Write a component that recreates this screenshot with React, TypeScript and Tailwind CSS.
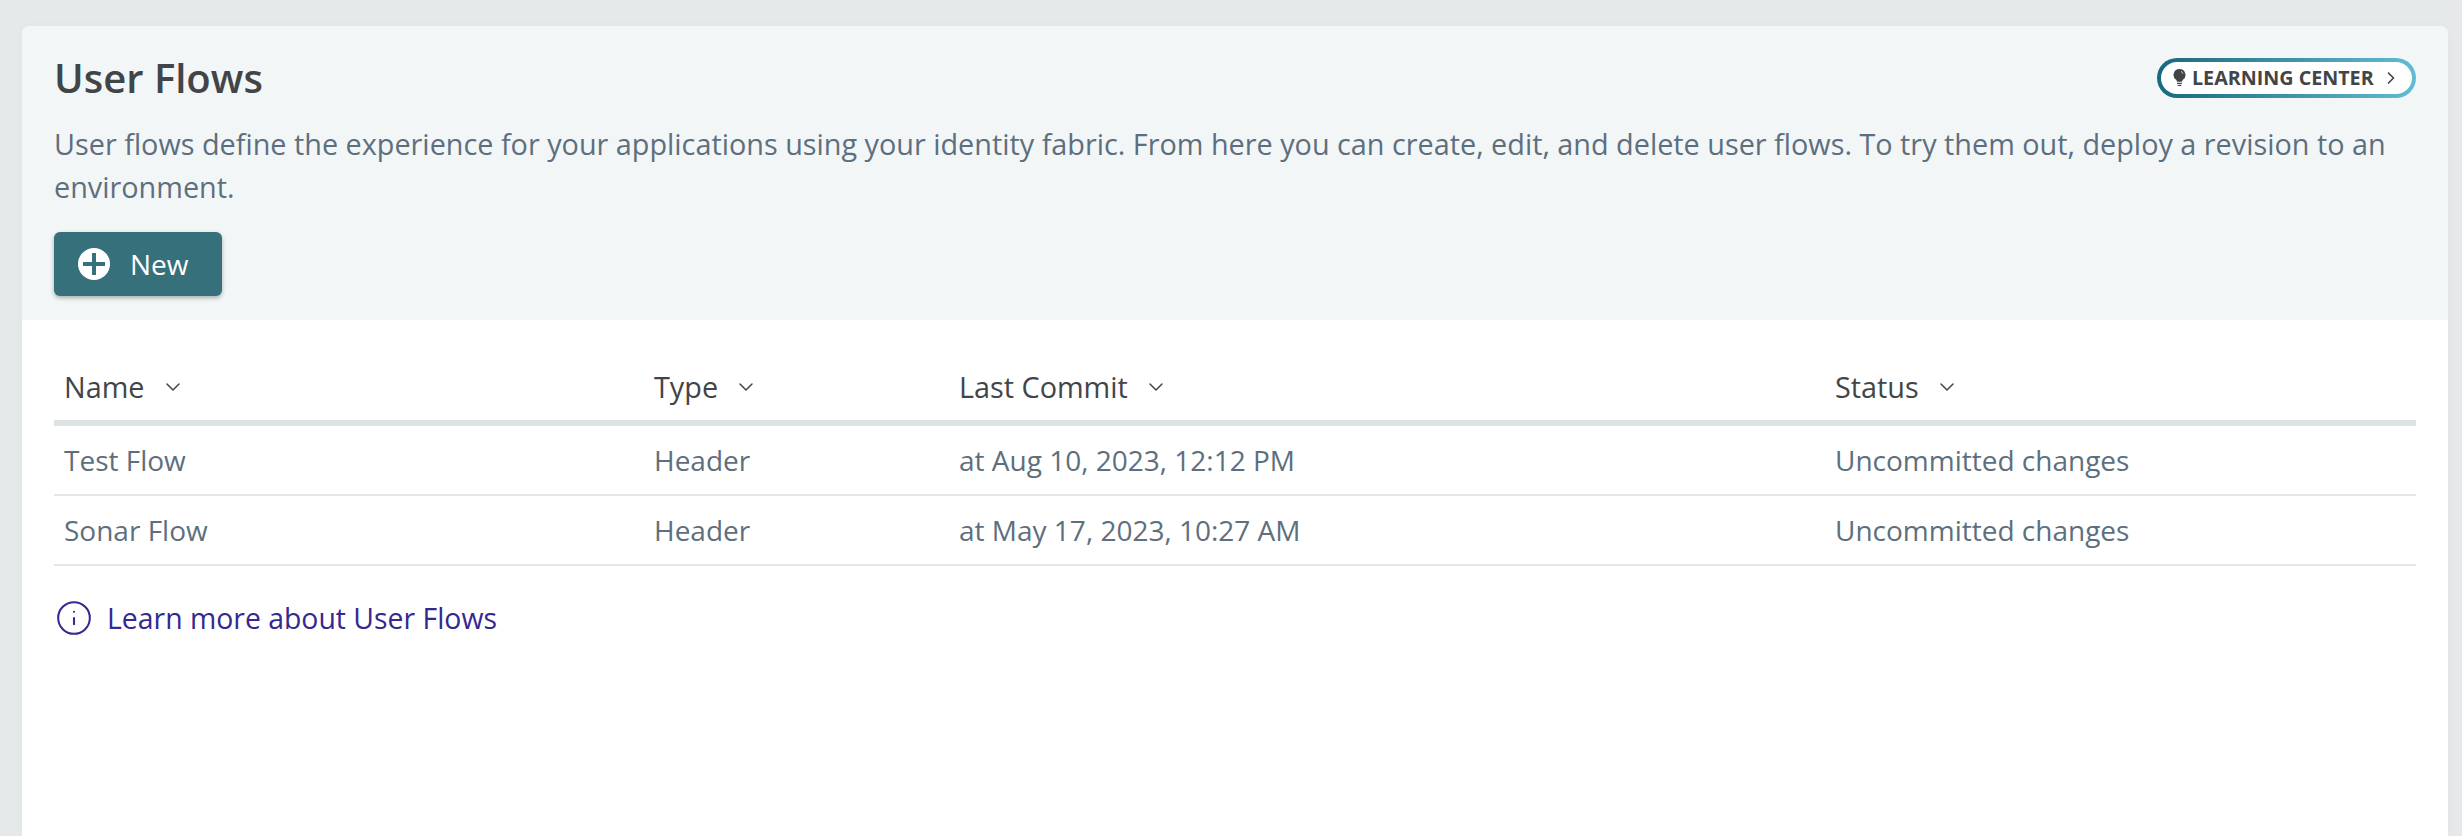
import React from 'react';
import { ChevronDown, ChevronRight, Info } from 'lucide-react';

const rows = [
  { name: 'Test Flow', type: 'Header', commit: 'at Aug 10, 2023, 12:12 PM', status: 'Uncommitted changes' },
  { name: 'Sonar Flow', type: 'Header', commit: 'at May 17, 2023, 10:27 AM', status: 'Uncommitted changes' },
];

const columns = ['Name', 'Type', 'Last Commit', 'Status'];

const App = () => {
  return (
    <div className="h-screen overflow-hidden bg-[#e6e9ea] px-[22px] pt-[26px] pr-[14px] font-['Open_Sans',sans-serif]">
      <div className="h-[810px] overflow-hidden rounded-t-lg bg-white shadow-[0_0_14px_rgba(0,0,0,0.025)]">
        <div className="h-[294px] bg-[#f2f6f7] px-8 pt-[26px]">
          <div className="flex items-start justify-between">
            <h1 className="text-[40px] leading-[52px] font-semibold text-[#424547]">User Flows</h1>
            <a className="mt-1.5 rounded-full bg-gradient-to-r from-[#17697e] to-[#62bcd3] p-1">
              <span className="flex h-8 w-[251px] items-center rounded-full bg-white pl-3 text-[19.7px] font-bold text-[#424547]">
                <svg viewBox="0 0 14 20" className="mr-1.5 h-[18px] w-[13px]">
                  <path d="M7 0a6.6 6.6 0 0 0-3.8 12c.7.6 1 1.4 1 2.2h5.6c0-.8.3-1.6 1-2.2A6.6 6.6 0 0 0 7 0z" fill="#424547" />
                  <path d="M8.6 2.6a3.4 3.4 0 0 1 2 2.6" fill="none" stroke="#fff" strokeWidth="0.8" />
                  <rect x="4.2" y="15.3" width="5.6" height="1.3" fill="#424547" />
                  <rect x="5" y="17.6" width="4" height="1.3" fill="#424547" />
                </svg>
                LEARNING CENTER
                <ChevronRight className="ml-[7px] h-5 w-5" strokeWidth={2} />
              </span>
            </a>
          </div>
          <p className="mt-[18px] text-[28.8px] leading-[43px] text-[#5d6f7e]">
            User flows define the experience for your applications using your identity fabric. From here you can create, edit, and delete user flows. To try them out, deploy a revision to an environment.
          </p>
          <button className="mt-[24px] flex h-16 w-[168px] items-center rounded-md bg-[#36707b] pl-6 text-[28px] text-white shadow-[0_2px_4px_rgba(0,0,0,0.3)]">
            <svg viewBox="0 0 32 32" className="mr-[20px] h-8 w-8">
              <circle cx="16" cy="16" r="16" fill="#fff" />
              <path d="M14 5h4v9h9v4h-9v9h-4v-9H5v-4h9z" fill="#36707b" />
            </svg>
            New
          </button>
        </div>
        <div className="px-8">
          <div className="mt-[38px] grid h-[68px] grid-cols-[590px_305px_876px_1fr] items-center border-b-[6px] border-[#dde3e4] pb-1 text-[28.8px] text-[#424547]">
            {columns.map((col) => (
              <div key={col} className="flex items-center pl-2.5">
                {col}
                <ChevronDown className="ml-4 h-6 w-6" strokeWidth={1.5} />
              </div>
            ))}
          </div>
          {rows.map((row) => (
            <div key={row.name} className="grid h-[70px] grid-cols-[590px_305px_876px_1fr] items-center border-b-2 border-[#e4e8e9] text-[28px] text-[#5d6f7e]">
              <div className="pl-2.5">{row.name}</div>
              <div className="pl-2.5">{row.type}</div>
              <div className="pl-2.5">{row.commit}</div>
              <div className="pl-2.5">{row.status}</div>
            </div>
          ))}
          <a className="mt-[31px] flex items-center text-[28.4px] text-[#35288f]">
            <Info className="mr-3.5 ml-px h-[38px] w-[38px]" strokeWidth={1.3} />
            Learn more about User Flows
          </a>
        </div>
      </div>
    </div>
  );
};

export default App;
